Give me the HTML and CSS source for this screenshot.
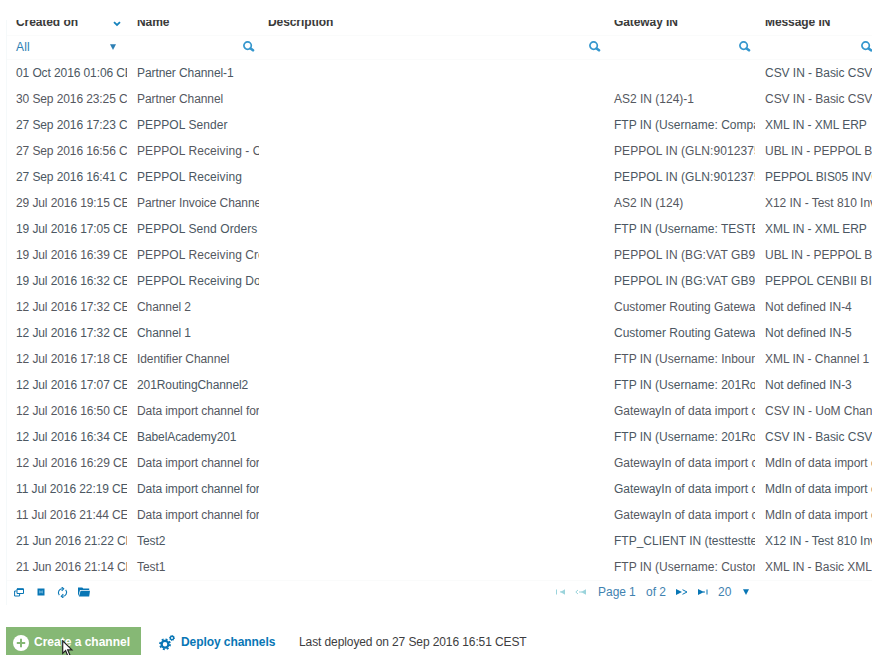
FILE: index.html
```
<!DOCTYPE html>
<html lang="en">
<head>
<meta charset="utf-8">
<title>Channels</title>
<link rel="stylesheet" href="styles.css">
</head>
<body>
<svg class="defs" width="0" height="0" aria-hidden="true">
  <symbol id="lens" viewBox="0 0 12 11"><circle cx="4.6" cy="4.6" r="3.7" fill="none" stroke="currentColor" stroke-width="1.7"/><path d="M7.6 7.4l2.4 1.9" stroke="currentColor" stroke-width="2.6" stroke-linecap="round"/></symbol>
  <symbol id="down" viewBox="0 0 6 6"><path d="M0 .3h6L3 6z" fill="currentColor"/></symbol>
</svg>
<main class="page">
  <section class="grid">
    <div class="row head">
      <div class="cell sorted"><span>Created on</span><svg class="chevron" width="8" height="6" viewBox="0 0 8 6"><path d="M1 1.2l3 2.8 3-2.8" fill="none" stroke="currentColor" stroke-width="1.8"/></svg></div>
      <div class="cell">Name</div><div class="cell">Description</div><div class="cell">Gateway IN</div><div class="cell">Message IN</div>
    </div>
    <div class="row filters">
      <div class="cell select"><span>All</span><svg width="6" height="6"><use href="#down"/></svg></div>
      <div class="cell"><svg class="lens" width="12" height="11"><use href="#lens"/></svg></div>
      <div class="cell"><svg class="lens" width="12" height="11"><use href="#lens"/></svg></div>
      <div class="cell"><svg class="lens" width="12" height="11"><use href="#lens"/></svg></div>
      <div class="cell"><svg class="lens last" width="12" height="11"><use href="#lens"/></svg></div>
    </div>
    <div class="row"><div class="cell">01 Oct 2016 01:06 CEST</div><div class="cell">Partner Channel-1</div><div class="cell"></div><div class="cell"></div><div class="cell">CSV IN - Basic CSV</div></div>
    <div class="row"><div class="cell">30 Sep 2016 23:25 C</div><div class="cell">Partner Channel</div><div class="cell"></div><div class="cell">AS2 IN (124)-1</div><div class="cell">CSV IN - Basic CSV</div></div>
    <div class="row"><div class="cell">27 Sep 2016 17:23 C</div><div class="cell wide">PEPPOL Sender</div><div class="cell"></div><div class="cell">FTP IN (Username: Company</div><div class="cell">XML IN - XML ERP</div></div>
    <div class="row"><div class="cell">27 Sep 2016 16:56 C</div><div class="cell wide">PEPPOL Receiving - Orders</div><div class="cell"></div><div class="cell wide">PEPPOL IN (GLN:9012375</div><div class="cell">UBL IN - PEPPOL BIS</div></div>
    <div class="row"><div class="cell">27 Sep 2016 16:41 C</div><div class="cell wide">PEPPOL Receiving</div><div class="cell"></div><div class="cell wide">PEPPOL IN (GLN:9012375</div><div class="cell">PEPPOL BIS05 INVOICE</div></div>
    <div class="row"><div class="cell">29 Jul 2016 19:15 CEST</div><div class="cell">Partner Invoice Channel</div><div class="cell"></div><div class="cell">AS2 IN (124)</div><div class="cell">X12 IN - Test 810 Invoice</div></div>
    <div class="row"><div class="cell">19 Jul 2016 17:05 CEST</div><div class="cell wide">PEPPOL Send Orders</div><div class="cell"></div><div class="cell">FTP IN (Username: TESTER</div><div class="cell">XML IN - XML ERP</div></div>
    <div class="row"><div class="cell">19 Jul 2016 16:39 CEST</div><div class="cell wide">PEPPOL Receiving Credit</div><div class="cell"></div><div class="cell wide">PEPPOL IN (BG:VAT GB9</div><div class="cell">UBL IN - PEPPOL BIS</div></div>
    <div class="row"><div class="cell">19 Jul 2016 16:32 CEST</div><div class="cell wide">PEPPOL Receiving Docs</div><div class="cell"></div><div class="cell wide">PEPPOL IN (BG:VAT GB9</div><div class="cell wide">PEPPOL CENBII BIS</div></div>
    <div class="row"><div class="cell">12 Jul 2016 17:32 CEST</div><div class="cell">Channel 2</div><div class="cell"></div><div class="cell">Customer Routing Gatewa</div><div class="cell">Not defined IN-4</div></div>
    <div class="row"><div class="cell">12 Jul 2016 17:32 CEST</div><div class="cell">Channel 1</div><div class="cell"></div><div class="cell">Customer Routing Gatewa</div><div class="cell">Not defined IN-5</div></div>
    <div class="row"><div class="cell">12 Jul 2016 17:18 CEST</div><div class="cell">Identifier Channel</div><div class="cell"></div><div class="cell">FTP IN (Username: Inbound</div><div class="cell">XML IN - Channel 1</div></div>
    <div class="row"><div class="cell">12 Jul 2016 17:07 CEST</div><div class="cell">201RoutingChannel2</div><div class="cell"></div><div class="cell">FTP IN (Username: 201Rout</div><div class="cell">Not defined IN-3</div></div>
    <div class="row"><div class="cell">12 Jul 2016 16:50 CEST</div><div class="cell">Data import channel for</div><div class="cell"></div><div class="cell">GatewayIn of data import c</div><div class="cell">CSV IN - UoM Channel</div></div>
    <div class="row"><div class="cell">12 Jul 2016 16:34 CEST</div><div class="cell">BabelAcademy201</div><div class="cell"></div><div class="cell">FTP IN (Username: 201Rout</div><div class="cell">CSV IN - Basic CSV</div></div>
    <div class="row"><div class="cell">12 Jul 2016 16:29 CEST</div><div class="cell">Data import channel for</div><div class="cell"></div><div class="cell">GatewayIn of data import c</div><div class="cell">MdIn of data import c</div></div>
    <div class="row"><div class="cell">11 Jul 2016 22:19 CEST</div><div class="cell">Data import channel for</div><div class="cell"></div><div class="cell">GatewayIn of data import c</div><div class="cell">MdIn of data import c</div></div>
    <div class="row"><div class="cell">11 Jul 2016 21:44 CEST</div><div class="cell">Data import channel for</div><div class="cell"></div><div class="cell">GatewayIn of data import c</div><div class="cell">MdIn of data import c</div></div>
    <div class="row"><div class="cell">21 Jun 2016 21:22 CEST</div><div class="cell">Test2</div><div class="cell"></div><div class="cell">FTP_CLIENT IN (testtestte</div><div class="cell">X12 IN - Test 810 Invoice</div></div>
    <div class="row"><div class="cell">21 Jun 2016 21:14 CEST</div><div class="cell">Test1</div><div class="cell"></div><div class="cell">FTP IN (Username: Custom</div><div class="cell">XML IN - Basic XML</div></div>
    <div class="pager">
      <div class="tools">
        <svg width="10" height="9" viewBox="0 0 10 9" fill="none" stroke="currentColor"><path d="M3 .9h6.5v4.6H3z" /><path d="M3 1.2h6.5" stroke-width="1.6"/><path d="M2.6 3H.6v5h5V5.8"/></svg>
        <svg width="8" height="8" viewBox="0 0 8 8"><path d="M.5.5h7v7h-7z" fill="currentColor"/><path d="M2.8 2.4v3M5.2 2.4v3M2.8 4h2.4" stroke="#9bd0ec" stroke-width=".8"/></svg>
        <svg width="11" height="11" viewBox="0 0 11 11" fill="none" stroke="currentColor" stroke-width="1.1"><path d="M2.3 8.2A4 4 0 0 1 5.7 1.7M8.7 2.8A4 4 0 0 1 5.3 9.3"/><path d="M4.7 0l2 1.8-2 2M6.3 7.2l-2 2 2 1.8"/></svg>
        <svg width="12" height="10" viewBox="0 0 12 10" fill="currentColor"><path d="M0 .4h4.3l1 1.2h5.9v1.5H2L.8 7.6 0 9z"/><path d="M2.6 3.8H12L11.2 9.6H.9z"/></svg>
      </div>
      <div class="paging">
        <svg class="first off" width="9" height="6" viewBox="0 0 9 6"><path d="M.5.5v5M4 2.9h2" stroke="currentColor"/><path d="M9 .3v5.4L4.4 3z" fill="currentColor"/></svg>
        <svg class="prev off" width="11" height="6" viewBox="0 0 11 6"><path d="M3 1L.8 3 3 5M4 3h3" fill="none" stroke="currentColor"/><path d="M11 .3v5.4L6 3z" fill="currentColor"/></svg>
        <span class="page-label">Page</span><span class="page-no">1</span><span class="page-of">of 2</span>
        <svg class="next" width="12" height="6" viewBox="0 0 12 6"><path d="M0 0v6l6-3z" fill="currentColor"/><path d="M6.5 .7L11 3 6.5 5.3" fill="none" stroke="currentColor"/></svg>
        <svg class="end" width="10" height="6" viewBox="0 0 10 6"><path d="M0 0v6l6-3z" fill="currentColor"/><path d="M5 3h2M9 .5v5" stroke="currentColor"/></svg>
        <span class="size">20</span>
        <svg width="6" height="6"><use href="#down"/></svg>
      </div>
    </div>
  </section>
  <footer class="actions">
    <button class="create"><svg width="16" height="16" viewBox="0 0 16 16"><circle cx="8" cy="8" r="8" fill="#fff"/><path d="M8 3.8v8.4M3.8 8h8.4" stroke="#86b875" stroke-width="2"/></svg><span>Create a channel</span></button>
    <div class="deploy">
      <svg width="16" height="16" viewBox="0 0 16 16" fill="none" stroke="currentColor"><circle cx="6" cy="9.3" r="3.4" stroke-width="2.3"/><circle cx="6" cy="9.3" r="5" stroke-width="1.8" stroke-dasharray="1.96 1.96"/><circle cx="13" cy="3" r="1.7" stroke-width="1.4"/><circle cx="13" cy="3" r="2.5" stroke-width="1" stroke-dasharray=".98 .98"/></svg>
      <span>Deploy channels</span>
    </div>
    <span class="status">Last deployed on 27 Sep 2016 16:51 CEST</span>
  </footer>
  <svg class="cursor" width="12" height="18" viewBox="0 0 12 18"><path d="M.7.8v12.6l2.9-2.8 2.2 5.3 2.1-.9-2.2-5.1h4.2z" fill="#fff" stroke="#222" stroke-width="1.2"/></svg>
</main>
</body>
</html>
```
FILE: styles.css
```
* { box-sizing: border-box; }
body { margin: 0; background: #fff; color: #55585f; font: 12px/26px "Liberation Sans", Arial, sans-serif; }
.defs { position: absolute; }
.page { position: relative; width: 872px; height: 655px; padding: 20px 0 0 6px; overflow: hidden; }
.grid { border-left: 1px solid #f5f9fa; }
.row { display: grid; grid-template-columns: 120px 132px 346px 150px 117px; height: 26px; }
.cell { padding-left: 9px; overflow: hidden; white-space: nowrap; }
.cell:first-child { letter-spacing: -.1px; }
.cell:nth-child(2) { letter-spacing: -.09px; }
.cell:nth-child(5) { letter-spacing: -.04px; }
.cell:nth-child(2), .cell:nth-child(5) { padding-left: 10px; }
.row .cell.wide { letter-spacing: .08px; }
.row:nth-child(odd) { color: #4b5762; }
.head { height: 16px; overflow: hidden; border-bottom: 1px solid #fafbfb; font-weight: bold; }
.row.head { color: #3a3a3a; }
.row.head .cell { height: 26px; margin-top: -11px; letter-spacing: -.08px; }
.sorted, .select { display: flex; justify-content: space-between; align-items: center; }
.chevron { color: #1683bd; margin: 3px 6px 0 0; }
.row.filters { height: 24px; color: #0f7fbf; line-height: 22px; padding-bottom: 2px; border-bottom: 1px solid #fafbfb; }
.row.filters .cell { letter-spacing: .2px; }
.select { padding-right: 11px; color: #2d7fb4; }
.filters .cell + .cell { display: flex; justify-content: flex-end; align-items: center; padding-right: 4px; }
.filters .cell + .cell:last-child { padding-right: 0; }
.lens { color: #3496cd; flex: none; }
.lens.last { margin-right: -1px; }
.pager { display: flex; height: 25px; padding-bottom: 2px; align-items: center; color: #0876b5; border-top: 1px solid #fafbfb; }
.tools { display: flex; width: 549px; padding-left: 7px; align-items: center; }
.tools svg:nth-child(2) { margin-left: 13px; }
.tools svg:nth-child(3) { margin-left: 12px; }
.tools svg:nth-child(4) { margin-left: 10px; }
.paging { display: flex; align-items: center; }
.off { color: #9bd4dc; }
.prev { margin-left: 10px; }
.page-label, .page-no, .page-of, .size { color: #3f82b0; }
.page-label { width: 31px; margin-left: 12px; }
.page-no { width: 17px; }
.page-of { width: 30px; }
.end { margin-left: 10px; }
.size { width: 25px; margin-left: 10px; }
.actions { display: flex; margin-top: 22px; height: 32px; line-height: 31px; }
.create { display: flex; align-items: center; width: 135px; height: 32px; padding: 0 0 1px 7px; border: 0; background: #86b875; color: #fff; font: bold 12px/31px "Liberation Sans", Arial, sans-serif; }
.create span { margin-left: 5px; white-space: nowrap; }
.deploy { display: flex; align-items: center; height: 31px; width: 158px; padding-left: 18px; color: #0876b5; font-weight: bold; letter-spacing: -.07px; }
.deploy span { margin-left: 6px; }
.status { color: #3d3d40; white-space: nowrap; letter-spacing: -.1px; }
.cursor { position: absolute; left: 62px; top: 640px; }
```
